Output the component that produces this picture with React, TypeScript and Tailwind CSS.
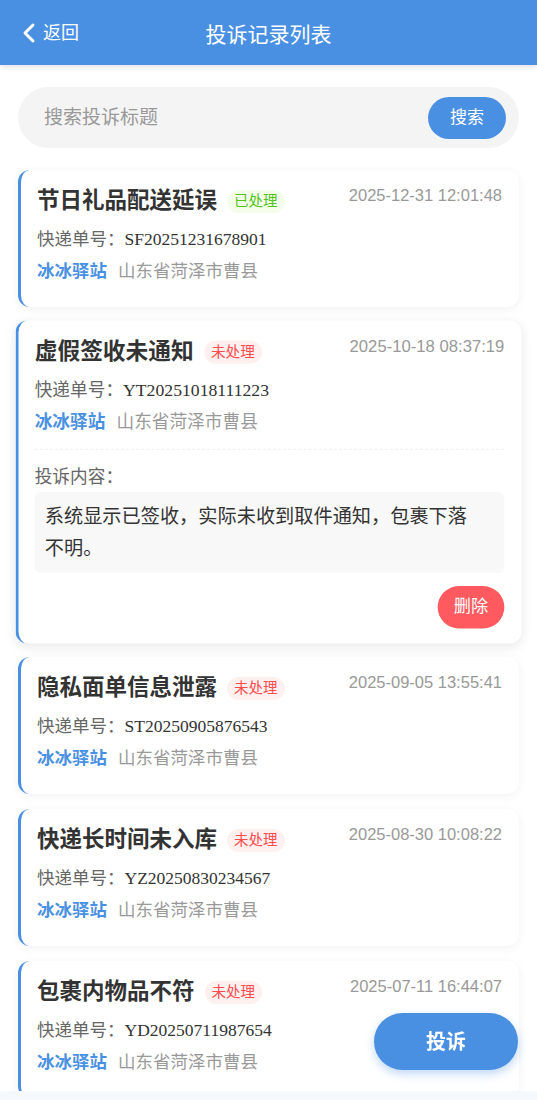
import { ChevronLeft } from "lucide-react";

type Complaint = {
  title: string;
  status: "done" | "pending";
  time: string;
  no: string;
  content?: string;
};

const complaints: Complaint[] = [
  { title: "节日礼品配送延误", status: "done", time: "2025-12-31 12:01:48", no: "SF20251231678901" },
  {
    title: "虚假签收未通知",
    status: "pending",
    time: "2025-10-18 08:37:19",
    no: "YT20251018111223",
    content: "系统显示已签收，实际未收到取件通知，包裹下落不明。",
  },
  { title: "隐私面单信息泄露", status: "pending", time: "2025-09-05 13:55:41", no: "ST20250905876543" },
  { title: "快递长时间未入库", status: "pending", time: "2025-08-30 10:08:22", no: "YZ20250830234567" },
  { title: "包裹内物品不符", status: "pending", time: "2025-07-11 16:44:07", no: "YD20250711987654" },
];

function StatusTag({ status }: { status: Complaint["status"] }) {
  if (status === "done") {
    return (
      <span className="ml-[10px] px-[7px] h-[23px] leading-[23px] rounded-full text-[14.5px] bg-[#f3fde9] text-[#52c41a]">
        已处理
      </span>
    );
  }
  return (
    <span className="ml-[10px] px-[7px] h-[23px] leading-[23px] rounded-full text-[14.5px] bg-[#fff0f0] text-[#ff4d4f]">
      未处理
    </span>
  );
}

function ComplaintCard({ item }: { item: Complaint }) {
  const open = !!item.content;
  return (
    <div
      className={
        open
          ? "bg-white rounded-[12px] border-l-[3px] border-[#4a90e2] pl-[16px] pr-[17px] pt-[16px] pb-[15px] shadow-[0_3px_12px_rgba(0,0,0,0.09)] scale-[1.01]"
          : "bg-white rounded-[12px] border-l-[3px] border-[#4a90e2] pl-[16px] pr-[17px] pt-[16px] pb-[24px] shadow-[0_2px_10px_rgba(0,0,0,0.06)]"
      }
    >
      <div className="flex items-start justify-between">
        <div className="flex items-center h-[30px]">
          <span className="text-[22.5px] font-bold text-[#333] leading-[30px]">{item.title}</span>
          <StatusTag status={item.status} />
        </div>
        <span className="text-[16.5px] text-[#999] leading-[20px] mt-[-1px]">{item.time}</span>
      </div>
      <div className="mt-[11px] flex items-center h-[24px] text-[17.5px] text-[#666]">
        <span>快递单号：</span>
        <span className="font-['Liberation_Serif'] text-[17.5px] text-[#333]">{item.no}</span>
      </div>
      <div className="mt-[8px] flex items-center h-[24px] text-[17.5px]">
        <span className="font-bold text-[#4a90e2]">冰冰驿站</span>
        <span className="ml-[11px] text-[#999]">山东省菏泽市曹县</span>
      </div>
      {open && (
        <>
          <div className="mt-[14px] border-t border-dashed border-[#eeeeee]" />
          <div className="mt-[15px] text-[17.5px] text-[#666] leading-[24px]">投诉内容：</div>
          <div className="mt-[3px] bg-[#f8f8f8] rounded-[6px] pl-[10px] pr-[24px] pt-[9px] pb-[9px] text-[19px] leading-[31px] text-[#333]">
            {item.content}
          </div>
          <div className="mt-[13px] flex justify-end">
            <button className="h-[42px] w-[66px] rounded-full bg-[#ff5a5f] text-white text-[17px]">删除</button>
          </div>
        </>
      )}
    </div>
  );
}

export default function App() {
  return (
    <div
      className="h-[1100px] overflow-hidden bg-[#f5f8fd]"
      style={{ fontFamily: '"Liberation Sans", "Noto Sans CJK SC", sans-serif' }}
    >
      <div className="h-[1091px] overflow-hidden bg-white">
        <header className="relative h-[65px] bg-[#4a90e2] flex items-center justify-center text-white shadow-[0_2px_6px_rgba(0,0,0,0.12)]">
          <button className="absolute left-[13px] top-[17px] flex items-center text-[18px] text-white">
            <ChevronLeft size={32} strokeWidth={2.2} className="-mr-[2px]" />
            <span>返回</span>
          </button>
          <h1 className="text-[21px] mt-[4px]">投诉记录列表</h1>
        </header>

        <div className="mx-[18px] mt-[22px] h-[61px] rounded-full bg-[#f4f4f4] flex items-center pl-[26px] pr-[13px]">
          <span className="flex-1 text-[19px] text-[#999] mt-[2px]">搜索投诉标题</span>
          <button className="h-[42px] w-[78px] rounded-full bg-[#4a90e2] text-white text-[17px] mt-[1px]">搜索</button>
        </div>

        <div className="mx-[18px] mt-[22px] flex flex-col gap-[15px]">
          {complaints.map((c) => (
            <ComplaintCard key={c.no} item={c} />
          ))}
        </div>
      </div>

      <button className="fixed right-[19px] top-[1013px] h-[57px] w-[144px] rounded-full bg-[#4a90e2] text-white text-[20px] font-bold shadow-[0_4px_10px_rgba(74,144,226,0.35)]">
        投诉
      </button>
    </div>
  );
}
